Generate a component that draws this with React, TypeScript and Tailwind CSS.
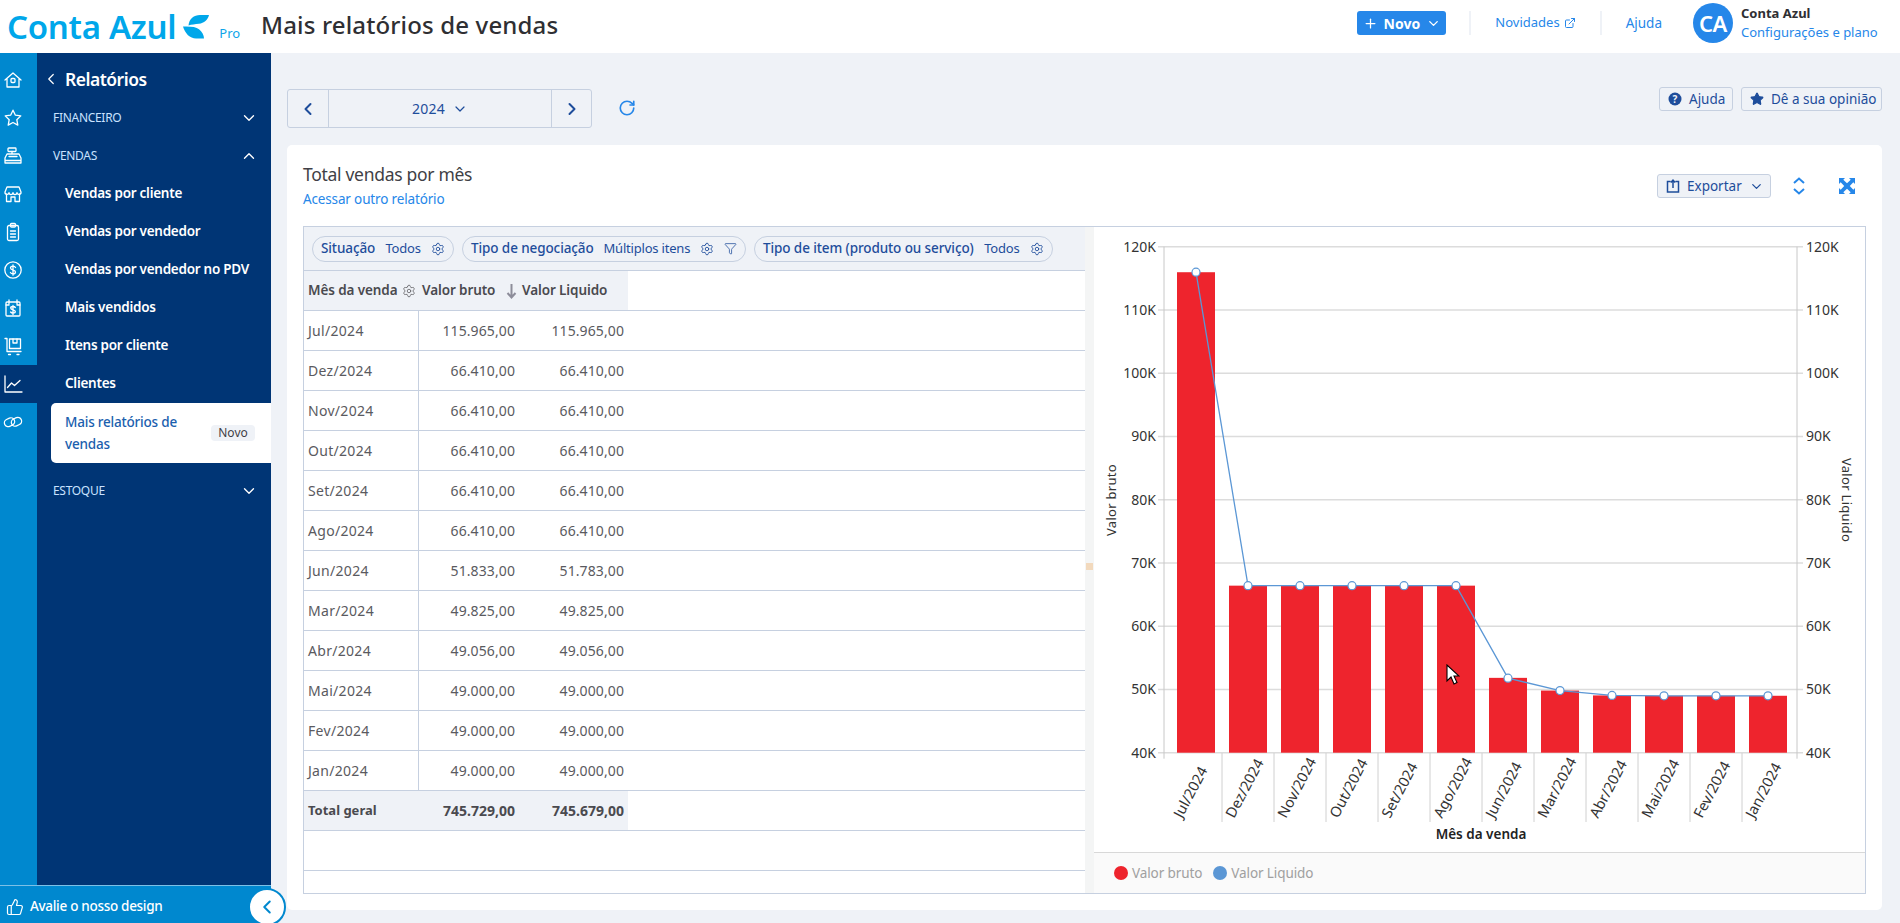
import { ChevronDown, ChevronLeft, ChevronRight, ChevronUp, Plus, RotateCw, Settings, Star, ExternalLink, ThumbsUp, Filter } from 'lucide-react';

const FONT = "font-['Noto_Sans',sans-serif]";

const rows = [
  ['Jul/2024', '115.965,00', '115.965,00'],
  ['Dez/2024', '66.410,00', '66.410,00'],
  ['Nov/2024', '66.410,00', '66.410,00'],
  ['Out/2024', '66.410,00', '66.410,00'],
  ['Set/2024', '66.410,00', '66.410,00'],
  ['Ago/2024', '66.410,00', '66.410,00'],
  ['Jun/2024', '51.833,00', '51.783,00'],
  ['Mar/2024', '49.825,00', '49.825,00'],
  ['Abr/2024', '49.056,00', '49.056,00'],
  ['Mai/2024', '49.000,00', '49.000,00'],
  ['Fev/2024', '49.000,00', '49.000,00'],
  ['Jan/2024', '49.000,00', '49.000,00'],
];

// chart values: bruto, liquido
const chartData = [
  ['Jul/2024', 115965, 115965],
  ['Dez/2024', 66410, 66410],
  ['Nov/2024', 66410, 66410],
  ['Out/2024', 66410, 66410],
  ['Set/2024', 66410, 66410],
  ['Ago/2024', 66410, 66410],
  ['Jun/2024', 51833, 51783],
  ['Mar/2024', 49825, 49825],
  ['Abr/2024', 49056, 49056],
  ['Mai/2024', 49000, 49000],
  ['Fev/2024', 49000, 49000],
  ['Jan/2024', 49000, 49000],
] as const;

const Gear = ({ className = '' }: { className?: string }) => <Settings size={14} strokeWidth={1.500} className={className} />;

const railIcons = [
  <g key="home"><path d="M2 10l8-7 8 7M4 8.500V17h12V8.500" /><rect x="8" y="8.500" width="4" height="4" rx="1" /></g>,
  <path key="star" d="M10 2.200l2.400 5 5.400.7-4 3.800 1 5.400-4.800-2.600-4.800 2.600 1-5.400-4-3.800 5.400-.7z" />,
  <g key="caixa"><rect x="5" y="2" width="8" height="3.500" rx=".8" /><path d="M9 5.500V8M4 8h12l2 4v5H2v-5zM2 14.500h16M6 10.500h8" /></g>,
  <g key="loja"><path d="M4 3h12l2 5a2 2 0 0 1-4 .6 2 2 0 0 1-4 0 2 2 0 0 1-4 0A2 2 0 0 1 2 8zM3.500 10v7.500h4.500V13h4v4.500h4.500V10" /></g>,
  <g key="clip"><rect x="4.500" y="3.500" width="11" height="15" rx="1.500" /><rect x="7.500" y="1.500" width="5" height="3.500" rx="1" /><path d="M7.500 9h5M7.500 12h5M7.500 15h5" /></g>,
  <g key="dolar"><circle cx="10" cy="10" r="8.200" /><path d="M12.500 7.500c-.5-1-1.400-1.400-2.500-1.400-1.400 0-2.500.7-2.500 1.900 0 2.700 5 1.400 5 4 0 1.200-1.100 1.900-2.500 1.900-1.100 0-2.100-.5-2.600-1.400M10 4.800v10.400" /></g>,
  <g key="cal"><rect x="3" y="4" width="14" height="14" rx="1" /><path d="M6 2v4M14 2v4M3 7h3M14 7h3M12.300 9.500c-.5-.7-1.200-1-2.300-1-1.300 0-2.300.6-2.300 1.600 0 2.300 4.600 1.200 4.600 3.400 0 1-1 1.600-2.300 1.600-1.100 0-1.900-.4-2.400-1.100M10 7.500v9" /></g>,
  <g key="cart"><path d="M2 2.500h2v13h14M5.500 18.500h2M14 18.500h2" /><rect x="6.500" y="3" width="11" height="9.500" /><path d="M10 3v4h4V3" /></g>,
  <g key="chart"><path d="M2 2v16h17" /><path d="M4.500 13.500l4-4.500 3 2.500 5.500-5" /></g>,
  <g key="link" transform="rotate(-25 10 10)"><rect x="1.500" y="5" width="10.500" height="7.500" rx="3.700" /><rect x="8" y="7.500" width="10.500" height="7.500" rx="3.700" /></g>,
];

const Rail = () => (
  <div className="w-[37px] shrink-0 bg-[#0088cf] flex flex-col pt-[8px]">
    {railIcons.map((icon, i) => (
      <div key={i} className={`h-[38px] flex items-center pl-[3px] text-white ${i === 8 ? 'bg-[#003575]' : ''}`}>
        <svg width="20" height="20" viewBox="0 0 20 20" fill="none" stroke="currentColor" strokeWidth="1.3" strokeLinejoin="round" strokeLinecap="round">{icon}</svg>
      </div>
    ))}
  </div>
);

const SectionTitle = ({ label, open, className = 'h-[38px]' }: { label: string; open?: boolean; className?: string }) => (
  <div className={`${className} flex items-center justify-between pl-[2px] pr-[13px] text-[#c9e2ff] text-[12px] tracking-[-0.3px]`}>
    <span>{label}</span>
    {open ? <ChevronUp size={18} strokeWidth={1.800} className="text-white" /> : <ChevronDown size={18} strokeWidth={1.800} className="text-white" />}
  </div>
);

const NavItem = ({ label }: { label: string }) => (
  <div className="h-[38px] flex items-center pl-[14px] text-white text-[13.500px] font-semibold tracking-[-0.26px]">{label}</div>
);

const Sidebar = () => (
  <aside className="relative w-[271px] shrink-0 flex flex-col">
    <div className="flex-1 flex min-h-0">
      <Rail />
      <div className="flex-1 bg-[#003575] pl-[14px]">
        <div className="h-[46px] flex items-center -ml-[9px] pt-[6px] text-white">
          <ChevronLeft size={18} strokeWidth={1.600} />
          <span className="ml-[5px] text-[17.500px] font-semibold tracking-[-0.5px]">Relatórios</span>
        </div>
        <SectionTitle label="FINANCEIRO" />
        <SectionTitle label="VENDAS" open className="h-[37px]" />
        <NavItem label="Vendas por cliente" />
        <NavItem label="Vendas por vendedor" />
        <NavItem label="Vendas por vendedor no PDV" />
        <NavItem label="Mais vendidos" />
        <NavItem label="Itens por cliente" />
        <NavItem label="Clientes" />
        <div className="mt-[1px] h-[60px] bg-white rounded-l-[5px] flex items-center justify-between pl-[14px] pr-[16px] text-[#1b5fae] text-[13.500px] font-medium leading-[22px] tracking-[-0.2px]">
          <span className="w-[120px]">Mais relatórios de vendas</span>
          <span className="h-[16px] w-[44px] rounded-[4px] bg-[#eff2f7] text-[#3f3f46] text-[12px] leading-[16px] text-center font-normal tracking-normal">Novo</span>
        </div>
        <div className="pt-[9px]">
          <SectionTitle label="ESTOQUE" />
        </div>
      </div>
    </div>
    <div className="h-[38px] bg-[#0088cf] border-t border-[#7dc0e6] flex items-center pl-[6px] pt-[4px] text-white text-[13.500px] font-medium tracking-[-0.3px]">
      <ThumbsUp size={18} strokeWidth={1.600} />
      <span className="ml-[6px]">Avalie o nosso design</span>
    </div>
    <div className="absolute right-[-15px] bottom-[-3px] w-[38px] h-[38px] rounded-full bg-white border-2 border-[#0088cf] flex items-center justify-center text-[#0088cf]">
      <ChevronLeft size={22} strokeWidth={2.200} />
    </div>
  </aside>
);

const Header = () => (
  <header className="h-[53px] shrink-0 bg-white flex items-center">
    <div className="flex items-center w-[261px]">
      <span className="ml-[7px] text-[#00a7ea] text-[33px] leading-none font-semibold tracking-[-0.3px] whitespace-nowrap">Conta Azul</span>
      <svg width="27" height="25" viewBox="0 0 27 25" className="ml-[7px]" fill="#00a7ea">
        <path d="M5.500 11.500C6 5 11 1 17 1h9C25 6 21 9 16 9.800c-4 .5-7.500.7-10.500 1.700z" />
        <path d="M0 12.500c7-.3 13 .2 16 2.800 3 2.500 5 6 5 9.200h-8C7 24.500 2 19.500 0 12.500z" />
      </svg>
      <span className="ml-[9px] mt-[14px] text-[#0ea5e9] text-[13px] leading-none">Pro</span>
    </div>
    <h1 className="mb-[3px] text-[24px] leading-none text-[#2f2f33] font-medium whitespace-nowrap tracking-[0.15px]">Mais relatórios de vendas</h1>
    <div className="flex-1" />
    <div className="mb-[7px] flex items-center">
      <div className="h-[24px] w-[89px] rounded-[3px] bg-[#2687e9] text-white text-[14px] font-bold flex items-center justify-center gap-[6px]">
        <Plus size={15} strokeWidth={2} />
        <span>Novo</span>
        <ChevronDown size={15} strokeWidth={2.200} />
      </div>
      <div className="ml-[23px] h-[24px] w-[2px] bg-[#eff2f7]" />
      <div className="ml-[24px] flex items-center gap-[4px] text-[#2687e9] text-[13px]">
        <span>Novidades</span>
        <ExternalLink size={12} strokeWidth={2} />
      </div>
      <div className="ml-[24px] h-[24px] w-[2px] bg-[#eff2f7]" />
      <span className="ml-[24px] text-[#2687e9] text-[13.500px]">Ajuda</span>
      <div className="ml-[31px] w-[40px] h-[40px] rounded-full bg-[#2687e9] text-white text-[22px] font-semibold flex items-center justify-center tracking-[-0.5px]">CA</div>
      <div className="ml-[8px] w-[159px] flex flex-col">
        <span className="text-[13px] leading-[19px] font-bold text-[#2f2f33]">Conta Azul</span>
        <span className="text-[13px] leading-[19px] text-[#2687e9] whitespace-nowrap">Configurações e plano</span>
      </div>
    </div>
  </header>
);

const Pill = ({ label, value, filter, className }: { label: string; value: string; filter?: boolean; className: string }) => (
  <div className={`h-[26px] rounded-full border border-[#c6d0e0] flex items-center justify-between px-[8px] text-[#1e4d9b] text-[13px] ${className}`}>
    <span className="font-medium text-[13.500px] tracking-[-0.1px] whitespace-nowrap">{label}</span>
    <span className="whitespace-nowrap tracking-[-0.2px]">{value}</span>
    <Gear />
    {filter && <Filter size={13} strokeWidth={1.400} />}
  </div>
);

const PivotTable = () => (
  <div className="w-[781px] shrink-0 flex flex-col">
    <div className="h-[44px] bg-[#eff2f7] border-b border-[#c6d0e0] flex items-center gap-[8px] pl-[8px]">
      <Pill label="Situação" value="Todos" className="w-[142px]" />
      <Pill label="Tipo de negociação" value="Múltiplos itens" filter className="w-[284px]" />
      <Pill label="Tipo de item (produto ou serviço)" value="Todos" className="w-[299px]" />
    </div>
    <div className="h-[40px] border-b border-[#c6d0e0] flex">
      <div className="w-[324px] bg-[#eff2f7] flex items-center pl-[4px] text-[#4a4a4f] text-[13.500px] font-semibold tracking-[-0.1px] whitespace-nowrap">
        <span className="w-[90px]">Mês da venda</span>
        <Gear className="ml-[4px] text-[#6b6b70]" />
        <span className="ml-[6px] w-[76px]">Valor bruto</span>
        <svg width="13" height="16" viewBox="0 0 13 16" fill="none" stroke="#8d8d9a" strokeWidth="2" className="ml-[7px]"><path d="M6.500 1v13M2.500 10l4 4.500 4-4.500" /></svg>
        <span className="ml-[4px]">Valor Liquido</span>
      </div>
    </div>
    {rows.map((r) => (
      <div key={r[0]} className="h-[40px] border-b border-[#c6d0e0] flex items-center text-[#5a5a60] text-[14px] tracking-[0.1px]">
        <div className="w-[115px] h-full border-r border-[#c6d0e0] flex items-center pl-[4px] tracking-[0.3px]">{r[0]}</div>
        <div className="w-[96px] text-right">{r[1]}</div>
        <div className="w-[109px] text-right">{r[2]}</div>
      </div>
    ))}
    <div className="h-[40px] border-b border-[#c6d0e0] flex">
      <div className="w-[324px] bg-[#eff2f7] flex items-center text-[#4a4a4f] text-[14px] font-bold">
        <div className="w-[115px] pl-[4px] text-[13px]">Total geral</div>
        <div className="w-[96px] text-right">745.729,00</div>
        <div className="w-[109px] text-right">745.679,00</div>
      </div>
    </div>
    <div className="h-[40px] border-b border-[#c6d0e0]" />
  </div>
);

// plot geometry measured from the pane's top left corner (1094, 227)
const x0 = 70;
const x1 = 703;
const yOf = (v: number) => 525.7 - ((v - 40000) / 10000) * 63.25;
const band = 52;

const Chart = () => {
  const ticks = [120, 110, 100, 90, 80, 70, 60, 50, 40];
  const pts = chartData.map((d, i) => [x0 + 32 + band * i, yOf(d[2])]);
  return (
    <div className="flex-1 flex flex-col min-w-0">
      <div className="flex-1 min-h-0 bg-white">
        <svg width="771" height="625" viewBox="0 0 771 625" className="block">
          {ticks.map((t) => (
            <g key={t}>
              <line x1={x0 - 6} x2={x1 + 6} y1={yOf(t * 1000)} y2={yOf(t * 1000)} stroke="#dcdcdc" strokeWidth="1.400" />
              <text x={x0 - 8} y={yOf(t * 1000) + 5} textAnchor="end" fontSize="14" fontFamily="Noto Sans" fill="#333">{t}K</text>
              <text x={x1 + 9} y={yOf(t * 1000) + 5} fontSize="14" fontFamily="Noto Sans" fill="#333">{t}K</text>
            </g>
          ))}
          <line x1={x0} x2={x0} y1={yOf(120000)} y2={yOf(40000) + 6} stroke="#c8c8c8" />
          <line x1={x1} x2={x1} y1={yOf(120000)} y2={yOf(40000) + 6} stroke="#c8c8c8" />
          {chartData.map((d, i) => (
            <rect key={d[0]} x={x0 + 13 + band * i} y={yOf(d[1])} width="38" height={525.7 - yOf(d[1])} fill="#ee242d" />
          ))}
          {chartData.map((d, i) => {
            const cx = x0 + 32 + band * i;
            return (
              <g key={d[0]}>
                {i < 11 && <line x1={x0 + 58 + band * i} x2={x0 + 58 + band * i} y1={526} y2={595} stroke="#d0d0d0" />}
                <text transform={`translate(${cx - 14} 592) rotate(-62)`} fontSize="14.500" fontFamily="Noto Sans" fill="#333">{d[0]}</text>
              </g>
            );
          })}
          <polyline points={pts.map((p) => p.join(',')).join(' ')} fill="none" stroke="#5b97d5" strokeWidth="1.300" />
          {pts.map((p, i) => (
            <circle key={i} cx={p[0]} cy={p[1]} r="4" fill="#fff" stroke="#5b97d5" strokeWidth="1.200" />
          ))}
          <text transform="translate(22 273) rotate(-90)" textAnchor="middle" fontSize="13" fontFamily="Noto Sans" fill="#333" letterSpacing="0.300">Valor bruto</text>
          <text transform="translate(748 273) rotate(90)" textAnchor="middle" fontSize="13" fontFamily="Noto Sans" fill="#333" letterSpacing="0.300">Valor Liquido</text>
          <text x="387" y="612" textAnchor="middle" fontSize="13.500" fontWeight="600" fontFamily="Noto Sans" fill="#222">Mês da venda</text>
        </svg>
      </div>
      <div className="h-[41px] bg-[#fafafa] border-t border-[#d8d8d8] flex items-center pl-[20px] text-[#a0a0a0] text-[13.500px] tracking-[-0.1px]">
        <span className="w-[14px] h-[14px] rounded-full bg-[#ee242d]" />
        <span className="ml-[4px]">Valor bruto</span>
        <span className="ml-[11px] w-[14px] h-[14px] rounded-full bg-[#5b97d5]" />
        <span className="ml-[4px]">Valor Liquido</span>
      </div>
    </div>
  );
};

const OutlineBtn = ({ children, className }: { children: React.ReactNode; className: string }) => (
  <div className={`h-[24px] rounded-[3px] border border-[#c6d0e0] flex items-center text-[#1e4d9b] text-[13.500px] ${className}`}>{children}</div>
);

const Main = () => (
  <main className="flex-1 min-w-0 bg-[#eff2f7] flex flex-col pl-[16px] pr-[18px]">
    <div className="h-[92px] shrink-0 flex pt-[34px]">
      <div className="mt-[2px] w-[305px] h-[39px] rounded-[3px] border border-[#c6d0e0] flex text-[#1e4d9b]">
        <div className="w-[40px] flex items-center justify-center"><ChevronLeft size={20} strokeWidth={2.400} /></div>
        <div className="flex-1 border-x border-[#c6d0e0] flex items-center justify-center gap-[7px] text-[14px]">
          <span className="tracking-[0.2px]">2024</span>
          <ChevronDown size={16} strokeWidth={1.800} />
        </div>
        <div className="w-[39px] flex items-center justify-center"><ChevronRight size={20} strokeWidth={2.400} /></div>
      </div>
      <div className="ml-[26px] mt-[12px] h-[18px] text-[#2687e9]"><RotateCw size={18} strokeWidth={2.200} /></div>
      <div className="flex-1" />
      <OutlineBtn className="w-[74px] pl-[8px] gap-[7px]">
        <svg width="14" height="14" viewBox="0 0 14 14"><circle cx="7" cy="7" r="6.500" fill="#1e4d9b" /><text x="7" y="10.500" textAnchor="middle" fontSize="10" fontWeight="700" fontFamily="Noto Sans" fill="#eff2f7">?</text></svg>
        <span>Ajuda</span>
      </OutlineBtn>
      <OutlineBtn className="ml-[8px] w-[141px] pl-[8px] gap-[7px]">
        <Star size={14} fill="currentColor" />
        <span className="whitespace-nowrap">Dê a sua opinião</span>
      </OutlineBtn>
    </div>
    <section className="h-[765px] shrink-0 bg-white rounded-[5px] px-[16px] flex flex-col">
      <div className="h-[81px] shrink-0 flex">
        <div className="pt-[17px]">
          <div className="text-[17.500px] leading-[24px] text-[#3f3f46] tracking-[-0.3px]">Total vendas por mês</div>
          <div className="mt-[3px] text-[13.500px] leading-[20px] text-[#2687e9] tracking-[-0.15px]">Acessar outro relatório</div>
        </div>
        <div className="flex-1" />
        <div className="mt-[29px] w-[114px] h-[24px] rounded-[3px] border border-[#c6d0e0] bg-[#eff2f7] flex items-center pl-[8px] gap-[7px] text-[#1e4d9b] text-[13.500px]">
          <svg width="14" height="14" viewBox="0 0 14 14" fill="none" stroke="currentColor" strokeWidth="1.500"><path d="M4.500 2.500H1.500v10.500h11V2.500h-3M7 9V1.500M4.800 3.500L7 1.200l2.200 2.300" /></svg>
          <span>Exportar</span>
          <ChevronDown size={15} strokeWidth={2} />
        </div>
        <svg width="14" height="18" viewBox="0 0 14 18" fill="none" stroke="#2687e9" strokeWidth="2" className="ml-[21px] mt-[32px]"><path d="M2 6l5-4.500L12 6M2 12l5 4.500 5-4.500" /></svg>
        <svg width="16" height="16" viewBox="0 0 16 16" fill="#2687e9" className="ml-[33px] mt-[33px] mr-[11px]">
          <path d="M0 0h6L4.300 1.700 8 5.200 11.700 1.700 10 0h6v6l-1.700-1.700L10.800 8l3.500 3.700L16 10v6h-6l1.700-1.700L8 10.800l-3.700 3.500L6 16H0v-6l1.700 1.700L5.200 8 1.700 4.300 0 6z" />
        </svg>
      </div>
      <div className="h-[668px] w-[1563px] shrink-0 border border-[#c6d0e0] flex">
        <PivotTable />
        <div className="w-[9px] shrink-0 bg-[#f4f5f5] flex items-center justify-center pt-[12px]">
          <div className="w-[7px] h-[7px] bg-[#f2d9bd]" />
        </div>
        <Chart />
      </div>
    </section>
  </main>
);

export default function App() {
  return (
    <div className={`${FONT} w-full h-screen overflow-hidden flex flex-col bg-[#eff2f7]`}>
      <Header />
      <div className="flex-1 min-h-0 flex">
        <Sidebar />
        <Main />
      </div>
      <svg width="14" height="22" viewBox="0 0 14 22" className="absolute left-[1446px] top-[664px]">
        <path d="M1 1v16l4-4 3 7 3-1.500-3-6.500h5z" fill="#fff" stroke="#000" strokeWidth="1.100" />
      </svg>
    </div>
  );
}
